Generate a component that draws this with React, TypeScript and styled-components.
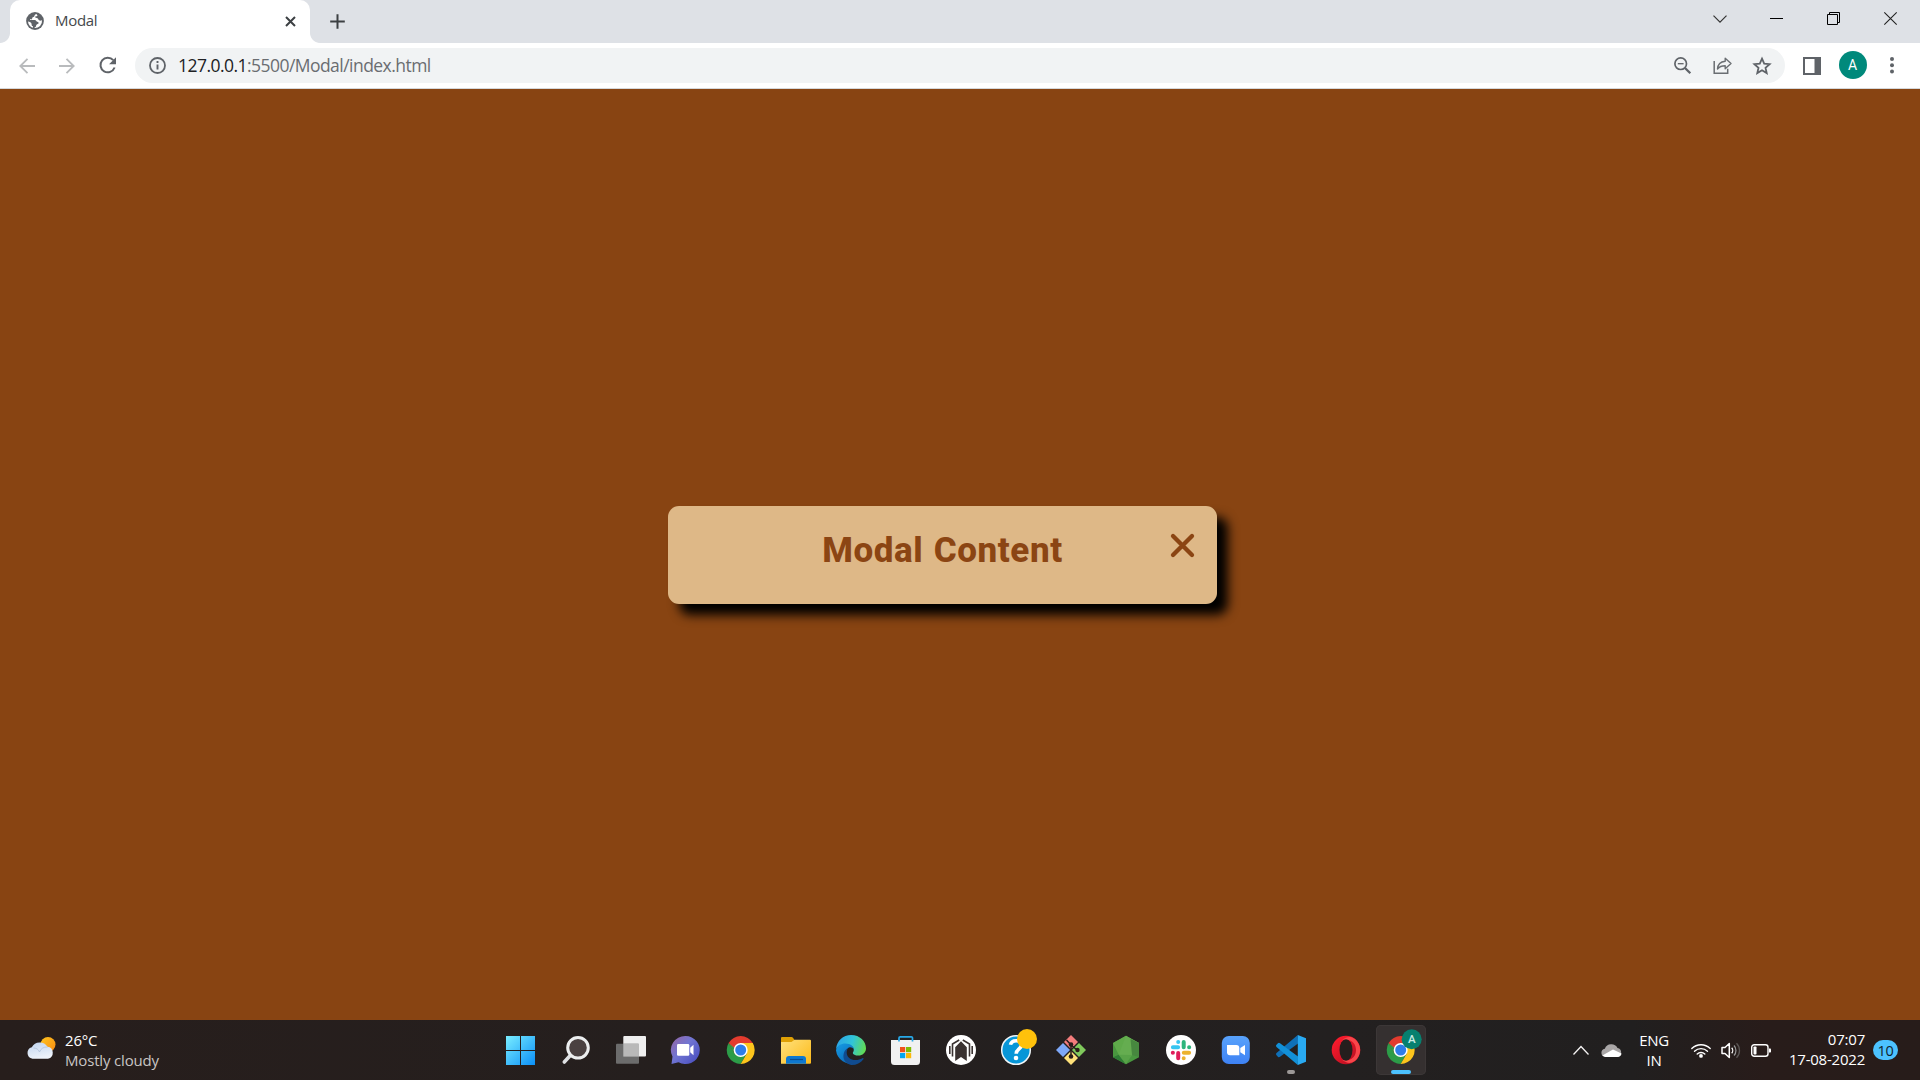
import React from "react";
import styled, { createGlobalStyle } from "styled-components";

const Global = createGlobalStyle`
  * { box-sizing: border-box; }
  body { margin: 0; overflow: hidden; font-family: "Open Sans", "Noto Sans", sans-serif; }
  svg { display: block; flex: none; overflow: visible; }
`;

const Screen = styled.div`
  width: 1920px; height: 1080px; display: flex; flex-direction: column; overflow: hidden;
`;

/* ---------- browser chrome ---------- */
const TabStrip = styled.header`
  height: 43px; flex: none; display: flex; background: #dee1e6;
`;
const Flare = styled.span<{ $side: "left" | "right" }>`
  width: 10px; height: 10px; align-self: flex-end;
  background: radial-gradient(circle at ${(p) => (p.$side === "left" ? "0 0" : "100% 0")}, #dee1e6 9.5px, #fff 10.3px);
`;
const Tab = styled.div`
  width: 300px; height: 43px; padding: 0 14.5px 1px 16px; display: flex; align-items: center;
  background: #fff; border-radius: 10px 10px 0 0;
`;
const TabTitle = styled.span`
  flex: 1; margin: -2px 0 0 11px; font-size: 15px; line-height: 20px; letter-spacing: -0.3px; color: #45484c;
`;
const NewTab = styled.div`
  width: 34px; display: flex; align-items: center; justify-content: center; padding-bottom: 1px;
`;
const WindowButtons = styled.div`
  margin-left: auto; height: 37px; display: flex;
`;
const WindowButton = styled.div<{ $w?: number }>`
  width: ${(p) => p.$w ?? 57}px; display: flex; align-items: center; justify-content: center;
`;
const Toolbar = styled.nav`
  height: 46px; flex: none; display: flex; align-items: center; background: #fff;
  border-bottom: 1px solid #d5d7da; padding: 0 8px 0 7px;
`;
const ToolButton = styled.div<{ $w?: number }>`
  width: ${(p) => p.$w ?? 40}px; height: 35px; display: flex; align-items: center; justify-content: center;
`;
const AddressBar = styled.div`
  width: 1650px; height: 35px; margin: 0 6px 0 8px; padding: 0 3px 0 14px; display: flex; align-items: center;
  background: #f1f3f4; border-radius: 18px;
`;
const Url = styled.span`
  flex: 1; margin: -1px 0 0 12px; font-size: 17.5px; line-height: 24px; letter-spacing: -0.54px; color: #6a6d71;
  b { font-weight: 400; color: #202124; }
`;
const Avatar = styled.div`
  width: 28px; height: 28px; margin-bottom: 1px; border-radius: 50%; background: #00897b; color: #fff;
  font: 400 14px/29px Roboto, sans-serif; text-align: center;
`;

/* ---------- page ---------- */
const Page = styled.main`
  flex: 1; display: flex; align-items: center; justify-content: center; padding-right: 35px; background: #884412;
`;
const Modal = styled.section`
  width: 549px; height: 98px; margin-top: 1px; border-radius: 11px; background: #deb887;
  box-shadow: 11px 11px 11px #000; padding: 19px 22px 0 48px; display: flex; align-items: flex-start;
`;
const ModalTitle = styled.h1`
  flex: 1; margin: 4px 0 0; text-align: center; white-space: nowrap; color: #8b4513;
  font: 800 35px/44px Roboto, "Liberation Sans", sans-serif; letter-spacing: 0.6px; word-spacing: 1px;
`;
const CloseButton = styled.div`
  width: 26px; height: 40px; display: flex; align-items: center; justify-content: center;
`;

/* ---------- taskbar ---------- */
const Taskbar = styled.footer`
  height: 60px; flex: none; display: flex; background: linear-gradient(90deg, #271e1c, #251f1e 35%, #232020 70%, #211f1f 85%, #281c1a 92%, #271c1a);
`;
const Weather = styled.div`
  width: 493px; padding: 10px 0 0 25px; display: flex;
`;
const WeatherText = styled.div`
  margin-left: 10px; font-size: 15px; line-height: 20px; letter-spacing: -0.17px; color: #fff;
`;
const Muted = styled.div`
  color: #c9c5c4;
`;
const Apps = styled.div`
  display: flex; align-items: center;
`;
const AppButton = styled.div<{ $active?: boolean }>`
  width: ${(p) => (p.$active ? 50 : 55)}px; height: 50px; margin-left: ${(p) => (p.$active ? 3 : 0)}px;
  padding-top: 10px; display: flex; flex-direction: column; align-items: center; border-radius: 5px;
  background: ${(p) => (p.$active ? "#353030" : "transparent")};
  box-shadow: ${(p) => (p.$active ? "inset 0 0 0 1px #3c3737" : "none")};
`;
const Indicator = styled.i<{ $w: number; $c: string }>`
  width: ${(p) => p.$w}px; height: 4px; margin-top: 5px; border-radius: 2px; background: ${(p) => p.$c};
`;
const Tray = styled.div`
  margin-left: auto; padding-right: 22px; display: flex; align-items: center; color: #fff;
`;
const TrayCell = styled.div<{ $w: number }>`
  width: ${(p) => p.$w}px; display: flex; justify-content: center;
`;
const Language = styled.div`
  width: 58px; font-size: 15px; line-height: 20px; letter-spacing: -0.3px; text-align: center; margin: -1px 3px 0 -1px;
`;
const Clock = styled.div`
  width: 89px; margin: -2px 8px 0 0; font-size: 15px; line-height: 20px; letter-spacing: -0.22px; text-align: right; white-space: nowrap;
`;
const Count = styled.div`
  width: 25px; height: 20px; border-radius: 10px; background: #4cc2ff; color: #10222c;
  font-size: 14.5px; line-height: 21px; letter-spacing: -0.3px; text-align: center;
`;

const Svg = ({ w = 30, h = w, children }: { w?: number; h?: number; children: React.ReactNode }) => (
  <svg width={w} height={h} viewBox={`${w === 30 ? 0.5 : 0} 0 ${w} ${h}`} fill="none">{children}</svg>
);

const ChromeMark = () => (
  <>
    <path d="M15.2 15 3.1 8A14 14 0 0 1 27.3 8Z" fill="#e33b2e" />
    <path d="M3.1 8A14 14 0 0 0 15.2 29L21.2 18.5 9.2 18.5Z" fill="#2c9c48" />
    <path d="M27.3 8A14 14 0 0 1 15.2 29L21.3 18.5 15.2 8Z" fill="#fdc51c" />
    <path d="M3.1 8 9.1 18.4 15.2 15 15.2 8Z" fill="#e33b2e" />
    <path d="M3.1 8 9.1 18.4 11 15Z" fill="#2c9c48" />
    <circle cx="15.2" cy="15" r="7" fill="#fff" />
    <circle cx="15.2" cy="15" r="5.5" fill="#2f7de9" />
  </>
);

const StartIcon = () => (
  <Svg>
    <defs><linearGradient id="win" x1="0" y1="0" x2="30" y2="30" gradientUnits="userSpaceOnUse"><stop stopColor="#7cf0ff" /><stop offset="1" stopColor="#0a8ff8" /></linearGradient></defs>
    <path d="M.5 1h14v14H.5zM15.5 1h14v14h-14zM.5 16h14v14H.5zM15.5 16h14v14h-14z" fill="url(#win)" />
  </Svg>
);
const SearchIcon = () => (
  <Svg>
    <path d="M10.2 20 3.8 27" stroke="#dfe1e3" strokeWidth="3.6" strokeLinecap="round" />
    <circle cx="17.5" cy="12.8" r="10.3" fill="#4a4141" stroke="#eceeef" strokeWidth="3" />
  </Svg>
);
const TaskViewIcon = () => (
  <Svg>
    <rect x="7.8" y="1" width="22.7" height="20.6" rx="1" fill="#efefef" />
    <rect x=".5" y="8.7" width="23" height="20" rx="1" fill="#6c6c6c" />
    <rect x="7.8" y="8.7" width="15.7" height="12.9" fill="#b9b9b9" />
  </Svg>
);
const ChatIcon = () => (
  <Svg>
    <defs><linearGradient id="chat" x1="3" y1="5" x2="24" y2="24" gradientUnits="userSpaceOnUse"><stop stopColor="#8e68ae" /><stop offset=".45" stopColor="#7175d2" /><stop offset="1" stopColor="#5257c4" /></linearGradient></defs>
    <path d="M15 1a14.3 14 0 1 1-7 26.2L1 29l1-7.4A14.3 14 0 0 1 15 1Z" fill="url(#chat)" />
    <rect x="6.5" y="9" width="12.3" height="11.7" rx="1.3" fill="#fff" />
    <path d="m19.7 12.7 3.3-3v10.6l-3.3-3z" fill="#fff" />
  </Svg>
);
const ChromeIcon = () => <Svg><ChromeMark /></Svg>;
const FolderIcon = () => (
  <Svg>
    <defs><linearGradient id="fold" x1="3" y1="4" x2="28" y2="30" gradientUnits="userSpaceOnUse"><stop stopColor="#ffe07a" /><stop offset="1" stopColor="#fcbb1c" /></linearGradient></defs>
    <path d="M.5 3a1 1 0 0 1 1-1h9.5a2 2 0 0 1 1.5.7L14 5v5H.5Z" fill="#dfa005" />
    <path d="M.5 7H11l3-2.3h15.5a1 1 0 0 1 1 1v22a1 1 0 0 1-1 1h-29Z" fill="url(#fold)" />
    <path d="M5.5 28.7V24a3 3 0 0 1 3-3h14a3 3 0 0 1 3 3v4.7Z" fill="#0e78d0" />
    <path d="M9.5 24.5h13" stroke="#0a4d92" strokeWidth="1.2" />
  </Svg>
);
const EdgeIcon = () => (
  <Svg>
    <defs>
      <linearGradient id="e1" x1="2" y1="6" x2="30" y2="14" gradientUnits="userSpaceOnUse"><stop stopColor="#2ca6e6" /><stop offset=".5" stopColor="#31c4d8" /><stop offset="1" stopColor="#63dc50" /></linearGradient>
      <linearGradient id="e2" x1="2" y1="10" x2="16" y2="30" gradientUnits="userSpaceOnUse"><stop stopColor="#1597e0" /><stop offset="1" stopColor="#0963b4" /></linearGradient>
    </defs>
    <path d="M.6 14C1.2 6 7.5 0 15.6 0 24.5 0 30.5 6.5 30.5 13.2c0 4.6-3.6 7.3-7.5 7.3-3.3 0-5.7-1.2-5.7-2.6 0-.8 1-1.2 1-3.2 0-3.2-3.6-5.2-8-5.2-4.2 0-7.7 1.6-9.7 4.5Z" fill="url(#e1)" />
    <path d="M.5 15.2C1.5 10.5 5.5 8.5 9.8 8.5c5 0 8.5 2.8 8.5 6-.8-1.6-2.4-2.5-4-2.3-2.6.4-4 3.3-3.6 6.6.5 5 5 8.8 9.5 9.2A15 15 0 0 1 .5 15.2Z" fill="url(#e2)" />
    <path d="M12.4 13c-2 3-1.6 7 .8 9.4 3.6 3.4 9.4 3.2 13.6.8.8-.4 1.6.2 1.1 1-2.8 4-7.4 6-12.3 5.8C9.5 28.8 7 23.5 8.2 18.8c.6-2.8 2.2-4.7 4.2-5.8Z" fill="#104b8f" />
  </Svg>
);
const StoreIcon = () => (
  <Svg>
    <path d="M.5 5h29v21.5a3.5 3.5 0 0 1-3.5 3.5H4a3.5 3.5 0 0 1-3.5-3.5Z" fill="#f1f1f1" />
    <path d="M8.500 6.500V3a1.200 1.200 0 0 1 1.200-1.200h11A1.200 1.200 0 0 1 22 3v3.500" stroke="#27a9e8" strokeWidth="1.700" />
    <path d="M9.500 12h5.200v5.200H9.500z" fill="#f1511b" /><path d="M15.500 12h5.200v5.200h-5.200z" fill="#80bb03" />
    <path d="M9.500 18h5.200v5.200H9.500z" fill="#05a6f0" /><path d="M15.500 18h5.200v5.200h-5.200z" fill="#fbb909" />
  </Svg>
);
const PortalIcon = () => (
  <Svg>
    <circle cx="15.500" cy="15" r="15" fill="#fff" />
    <path d="M9.700 26V12.300l5.800-6 5.800 6V26l-5.800-4Z" fill="#3a3231" />
    <path d="M13.700 5 7 9v12.500M17.300 5l6.700 4v12.500M4.300 11v8M26.700 11v8" stroke="#3a3231" strokeWidth="1.600" />
  </Svg>
);
const HelpIcon = () => (
  <Svg>
    <circle cx="15.500" cy="15" r="14.300" fill="#0796d8" stroke="#f0f5f7" strokeWidth="1.500" />
    <path d="M10 9.800c.5-3 3-4.100 5.700-4.100 3.200 0 5.300 1.800 5.300 4.400 0 3.800-5.300 4-5.300 8.700" stroke="#fff" strokeWidth="3.600" />
    <circle cx="15.500" cy="23" r="2.300" fill="#fff" />
    <circle cx="26.500" cy="4" r="10" fill="#ffc10b" />
  </Svg>
);
const GitIcon = () => (
  <Svg>
    <path d="M15.500 0 22.500 7l-7 7-7-7Z" fill="#f47c7c" />
    <path d="M7.500 8 14.500 15l-7 7-7-7Z" fill="#7ea8f8" />
    <path d="M23.500 8l7 7-7 7-7-7Z" fill="#80c95c" />
    <path d="m15.500 16 7 7-7 7-7-7Z" fill="#ffe27a" />
    <path d="m11 5 4.500 5V21M15.500 10l6 5" stroke="#241c1b" strokeWidth="1.500" />
    <circle cx="15.500" cy="9.500" r="2.300" fill="#2a1d1b" /><circle cx="22" cy="15" r="2.200" fill="#2a1d1b" /><circle cx="15.500" cy="21.500" r="2.300" fill="#2a1d1b" />
  </Svg>
);
const NodeIcon = () => (
  <Svg>
    <path d="m15.500.7 13 7.200v14.400l-13 7-13-7V7.900Z" fill="#49973f" />
    <path d="m15.500.7 4.700 4.500-12 14.500L2.500 8Z" fill="#5faa4a" />
    <path d="m15.500.7 13 7.200-8.300 14.200-12-2.400Z" fill="#65ad50" />
    <path d="M20 4 28.500 8v14l-7-2Z" fill="#47883f" />
    <path d="m2.500 22.200 5.700-2.500 7.300 9.600Z" fill="#2f7d35" /><path d="m8.200 19.700 13.300.3-6 9.300Z" fill="#58a348" />
  </Svg>
);
const SlackIcon = () => (
  <Svg>
    <circle cx="15.500" cy="15" r="15" fill="#fff" />
    <g strokeWidth="4" strokeLinecap="round">
      <path d="M12.700 6.900v.1M7.400 12.300h5.200" stroke="#36c5f0" />
      <path d="M18.200 6.900v5.300M23.600 12.300h.1" stroke="#2eb67d" />
      <path d="M18.300 17.800h5.300M18.200 23.200v.1" stroke="#ecb22e" />
      <path d="M12.700 17.900v5.300M7.300 17.800h.1" stroke="#e01e5a" />
    </g>
  </Svg>
);
const ZoomIcon = () => (
  <Svg>
    <defs><linearGradient id="zm" x2="0" y2="1"><stop stopColor="#58a2fb" /><stop offset="1" stopColor="#3e82f4" /></linearGradient></defs>
    <rect x="1.300" y="1" width="28" height="28" rx="7" fill="url(#zm)" />
    <path d="M6.500 10h9.300a3 3 0 0 1 3 3v7.300H9.500a3 3 0 0 1-3-3Z" fill="#fff" />
    <path d="m19.800 13 4.700-3v10.300l-4.700-3Z" fill="#fff" />
  </Svg>
);
const CodeIcon = () => (
  <Svg>
    <path d="M22.500 8.500 4.500 21.800a1.600 1.600 0 0 1-2.100-.1L1 20.300a1.500 1.500 0 0 1 0-2.200L22.300 0Z" fill="#0f70b8" />
    <path d="M22.500 21.500 4.500 8.200a1.600 1.600 0 0 0-2.100.1L1 9.700a1.500 1.500 0 0 0 0 2.200L22.300 30Z" fill="#1290d8" />
    <path d="M22.300 0 30.500 3.200v23.600L22.300 30Z" fill="#29aaf2" />
  </Svg>
);
const OperaIcon = () => (
  <Svg>
    <defs><linearGradient id="op" x1="4" y1="3" x2="28" y2="27" gradientUnits="userSpaceOnUse"><stop stopColor="#ff1b2d" /><stop offset="1" stopColor="#b40e20" /></linearGradient></defs>
    <circle cx="15.500" cy="15" r="14.300" fill="url(#op)" />
    <path d="M11.500 5.200C16 1.500 20 .8 24.500 4a14.300 14.300 0 0 1 0 22c-4.500 3-8.500 2.500-13-1.200 9 2 14-3 14-9.800s-5-11.800-14-9.800Z" fill="#f9454a" />
    <ellipse cx="15.500" cy="15" rx="6.500" ry="10.800" fill="#251e1d" />
  </Svg>
);
const ChromeProfileIcon = () => (
  <Svg>
    <ChromeMark />
    <circle cx="26.200" cy="4.300" r="10" fill="#07806f" />
    <text x="26.200" y="8.400" textAnchor="middle" fontFamily="Roboto, sans-serif" fontWeight="500" fontSize="11.500" fill="#c9ece5">A</text>
  </Svg>
);

const apps = [StartIcon, SearchIcon, TaskViewIcon, ChatIcon, ChromeIcon, FolderIcon, EdgeIcon, StoreIcon, PortalIcon, HelpIcon, GitIcon, NodeIcon, SlackIcon, ZoomIcon, CodeIcon, OperaIcon];

export default function App() {
  return (
    <Screen>
      <Global />
      <TabStrip>
        <Flare $side="left" />
        <Tab>
          <Svg w={18}>
            <circle cx="9" cy="9" r="8.900" fill="#5f6368" />
            <path d="M10.400 1.900c-1 .4-1.900 1-1.900 1.900 0 1-.8 1-1.700 1.400-.6.300-.3 1.300-1 1.700-.5.300-1.700.4-1.700.7 0 .6 3.300.3 4.700.3 1.200 0 1.200.9 1.900 1.700.7.600 1.900.3 1.900 1.300 0 1.200-1.800 1-2.300 2-.3.800-.1 1.500-1 2.200l-1.100.9A7.100 7.100 0 0 0 16 8c-.7.900-1.500.7-2.500.5-1.300-.2-1-1.600-2-2.200-.9-.5-2.400-.1-2.400-1.200 0-1 1.800-.6 2.300-1.400.3-.500-.5-1.100-1-1.800ZM2 9.500c.2 3.100 2.300 5.500 4.900 6.300V14c-1.200-.1-1.300-1-1.300-2.100C5.600 10.500 3.400 9.600 2 9.500Z" fill="#fff" />
          </Svg>
          <TabTitle>Modal</TabTitle>
          <Svg w={11}><path d="m1 1 9 9m0-9-9 9" stroke="#3c4043" strokeWidth="2" /></Svg>
        </Tab>
        <Flare $side="right" />
        <NewTab><Svg w={15}><path d="M7.500.2v14.600M.2 7.500h14.600" stroke="#3c4043" strokeWidth="2" /></Svg></NewTab>
        <WindowButtons>
          <WindowButton><Svg w={14} h={8}><path d="m.5.700 6.500 6.500L13.500.7" stroke="#333" strokeWidth="1.200" /></Svg></WindowButton>
          <WindowButton><Svg w={13} h={1}><path d="M0 .5h13" stroke="#000" /></Svg></WindowButton>
          <WindowButton $w={56}><Svg w={13}><path d="M.5 2.500h10v10H.500zM2.500 2.500v-2h10v10h-2" stroke="#000" /></Svg></WindowButton>
          <WindowButton $w={59}><Svg w={13}><path d="m.300.3 12.400 12.400m0-12.400L.3 12.700" stroke="#222" strokeWidth="1.100" /></Svg></WindowButton>
        </WindowButtons>
      </TabStrip>
      <Toolbar>
        <ToolButton><Svg w={16}><path d="M16 8H1.500M8.500.8 1.300 8l7.200 7.200" stroke="#b9bbbd" strokeWidth="1.800" /></Svg></ToolButton>
        <ToolButton><Svg w={16}><path d="M0 8h14.500M7.500.8 14.700 8l-7.200 7.200" stroke="#b9bbbd" strokeWidth="1.800" /></Svg></ToolButton>
        <ToolButton><Svg w={17}><path d="M14.300 3.200A7.300 7.300 0 1 0 15.600 10.500" stroke="#5f6368" strokeWidth="2" /><path d="M17 .3v6.900h-6.900Z" fill="#5f6368" /></Svg></ToolButton>
        <AddressBar>
          <Svg w={17}><circle cx="8.500" cy="8.500" r="7.500" stroke="#5f6368" strokeWidth="1.800" /><path d="M8.500 7.500v5M8.500 4v2" stroke="#5f6368" strokeWidth="1.900" /></Svg>
          <Url><b>127.0.0.1</b>:5500/Modal/index.html</Url>
          <ToolButton><Svg w={17}><circle cx="6.700" cy="6.700" r="5.800" stroke="#5f6368" strokeWidth="1.700" /><path d="m11 11 5.300 5.300" stroke="#5f6368" strokeWidth="2.300" /><path d="M3.800 6.700h5.800" stroke="#5f6368" strokeWidth="1.300" /></Svg></ToolButton>
          <ToolButton><Svg w={18} h={17}><path d="M1.200 4v12.300h13.500v-4.500" stroke="#6a6e72" strokeWidth="1.500" /><path d="M12.200 1.200 18 6.500l-5.800 5.200V8.800c-3.200 0-5.700.7-7.700 3.200.3-4.300 3-7.200 7.700-7.700Z" stroke="#6a6e72" strokeWidth="1.400" strokeLinejoin="round" /></Svg></ToolButton>
          <ToolButton><Svg w={18} h={17}><path d="m9 1.700 2.200 5 5.400.5-4.100 3.600 1.200 5.300L9 13.300l-4.700 2.800 1.200-5.300-4.100-3.600 5.400-.5Z" stroke="#5f6368" strokeWidth="1.800" /></Svg></ToolButton>
        </AddressBar>
        <ToolButton $w={42}><Svg w={18}><path d="M1 1h16v16H1z" stroke="#5f6368" strokeWidth="2" /><path d="M11.500 0H18v18h-6.500z" fill="#5f6368" /></Svg></ToolButton>
        <ToolButton $w={39}><Avatar>A</Avatar></ToolButton>
        <ToolButton $w={39}><Svg w={4} h={17}><circle cx="2" cy="2" r="2" fill="#5f6368" /><circle cx="2" cy="8.300" r="2" fill="#5f6368" /><circle cx="2" cy="14.600" r="2" fill="#5f6368" /></Svg></ToolButton>
      </Toolbar>
      <Page>
        <Modal>
          <ModalTitle>Modal Content</ModalTitle>
          <CloseButton><Svg w={23}><path d="m2 2 19 19m0-19L2 21" stroke="#8b4513" strokeWidth="4.300" strokeLinecap="round" /></Svg></CloseButton>
        </Modal>
      </Page>
      <Taskbar>
        <Weather>
          <svg width="30" height="30" viewBox="1 0 30 30">
            <defs>
              <linearGradient id="sun" x2="1" y2="1"><stop stopColor="#ffc51f" /><stop offset="1" stopColor="#f78a12" /></linearGradient>
              <linearGradient id="cl" x2=".3" y2="1"><stop stopColor="#c0d4ef" /><stop offset="1" stopColor="#edf2fa" /></linearGradient>
            </defs>
            <circle cx="24" cy="14.500" r="7.500" fill="url(#sun)" />
            <path d="M8.500 28.800a5.900 5.900 0 0 1-.7-11.500A9 9 0 0 1 23.500 16.800 6.100 6.100 0 0 1 24 28.800Z" fill="url(#cl)" />
            <path d="M9.500 18c3 0 5 1.500 6 4 1-3 4-5.300 8-5" stroke="#aebfd9" strokeWidth=".8" fill="none" />
          </svg>
          <WeatherText>26°C<Muted>Mostly cloudy</Muted></WeatherText>
        </Weather>
        <Apps>
          {apps.map((Icon, i) => (
            <AppButton key={i}>
              <Icon />
              <Indicator $w={8} $c={Icon === CodeIcon ? "#9c9897" : "transparent"} />
            </AppButton>
          ))}
          <AppButton $active><ChromeProfileIcon /><Indicator $w={20} $c="#4cc2ff" /></AppButton>
        </Apps>
        <Tray>
          <TrayCell $w={30}><Svg w={16} h={9}><path d="m.5 8.500 7.500-8 7.500 8" stroke="#f4f2f2" strokeWidth="1.300" /></Svg></TrayCell>
          <TrayCell $w={30}><Svg w={21} h={13}><path d="M4.200 13a4.200 4.200 0 0 1-.4-8.300A7 7 0 0 1 16.500 4 4.600 4.600 0 0 1 16.500 13Z" fill="#a9a6a6" /><path d="M1.300 11.500 12 5.500l8.500 4A4.200 4.200 0 0 1 16.500 13H4.200Z" fill="#fff" /></Svg></TrayCell>
          <Language>ENG<br />IN</Language>
          <TrayCell $w={30}><Svg w={20} h={15}><g stroke="#fff" strokeWidth="1.400" strokeLinecap="round"><path d="M.8 5.500a13 13 0 0 1 18.400 0M3.500 8.300a9.200 9.200 0 0 1 13 0M6.200 11a5.400 5.400 0 0 1 7.600 0" /></g><circle cx="10" cy="12.900" r="1.900" fill="#fff" /></Svg></TrayCell>
          <TrayCell $w={30}><Svg w={20} h={17}><path d="M1 5.500h3l4.300-4v14l-4.300-4H1Z" stroke="#fff" strokeWidth="1.500" strokeLinejoin="round" /><path d="M10.700 5.800c1.300 1.400 1.300 4 0 5.400" stroke="#fff" strokeWidth="1.300" /><path d="M13 3.500c2.600 2.600 2.600 7.400 0 10" stroke="#999" strokeWidth="1.200" /><path d="M15.500 1.200c4 4 4 10.600 0 14.600" stroke="#5b5655" strokeWidth="1.300" /></Svg></TrayCell>
          <TrayCell $w={30}><Svg w={20} h={13}><rect x=".7" y=".7" width="16.300" height="11.600" rx="2.500" stroke="#fff" strokeWidth="1.400" /><path d="M18 4.500h1.200a.8.800 0 0 1 .8.800v2.400a.8.800 0 0 1-.8.800H18Z" fill="#fff" /><rect x="2.500" y="2.500" width="3" height="8" rx=".8" fill="#fff" /></Svg></TrayCell>
          <Clock>07:07<br />17-08-2022</Clock>
          <Count>10</Count>
        </Tray>
      </Taskbar>
    </Screen>
  );
}
